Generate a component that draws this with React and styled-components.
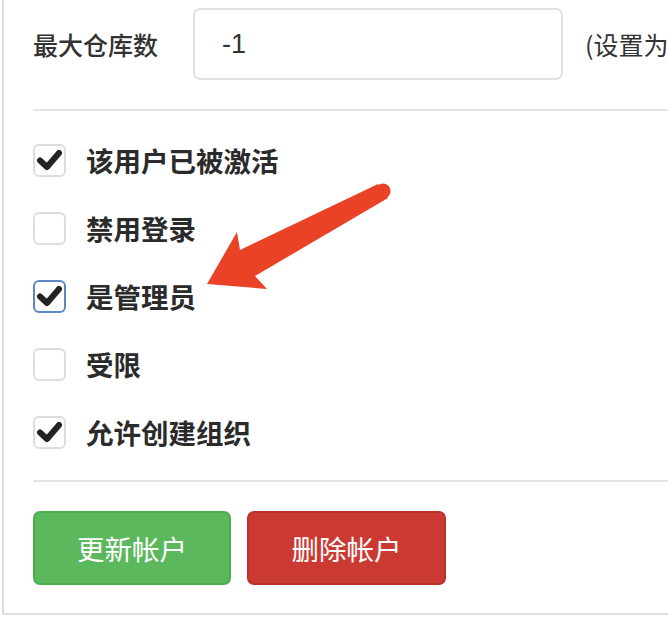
import React from 'react'
import styled, { createGlobalStyle } from 'styled-components'

const GlobalStyle = createGlobalStyle`
  html, body {
    margin: 0;
    padding: 0;
    background: #fff;
    overflow: hidden;
  }
  body {
    font-family: "Noto Sans CJK SC", "Liberation Sans", sans-serif;
    color: #333;
  }
`

const Page = styled.div`
  position: relative;
  width: 668px;
  height: 622px;
  overflow: hidden;
`

const Panel = styled.div`
  width: 760px;
  margin-left: 2px;
  border-left: 2px solid #ddd;
  border-bottom: 2px solid #ddd;
  padding: 8px 0 28px 29px;
`

const FieldRow = styled.div`
  display: flex;
  align-items: center;
  height: 72px;
`

const FieldLabel = styled.label`
  flex: 0 0 160px;
  font-size: 25px;
  font-weight: 500;
  white-space: nowrap;
  color: #333;
`

const TextInput = styled.input`
  flex: 0 0 370px;
  width: 370px;
  min-width: 0;
  box-sizing: border-box;
  height: 72px;
  border: 2px solid #e0e0e0;
  border-radius: 7px;
  padding: 0 0 0 27px;
  font-family: "Liberation Sans", "Noto Sans CJK SC", sans-serif;
  font-size: 27px;
  color: #333;
  outline: none;
`

const Help = styled.span`
  flex: 0 0 auto;
  margin-left: 22px;
  font-size: 25px;
  white-space: nowrap;
  color: #333;
`

const Divider = styled.hr`
  border: 0;
  border-top: 2px solid #e5e5e5;
  margin: ${p => p.$top}px 0 0;
`

const CheckList = styled.div`
  padding: 15px 0 14px;
`

const CheckRow = styled.label`
  display: flex;
  align-items: center;
  height: 68px;
  gap: 20px;
`

const Box = styled.span`
  box-sizing: border-box;
  width: 33px;
  height: 33px;
  border: 2px solid ${p => (p.$focus ? '#5a8ac6' : '#ddd')};
  border-radius: 6px;
  display: flex;
  align-items: center;
  justify-content: center;
  background: #fff;
`

const CheckText = styled.span`
  font-size: 27.5px;
  font-weight: 700;
  color: #2b2b2b;
`

const Actions = styled.div`
  display: flex;
  gap: 16px;
  margin-top: 29px;
`

const Button = styled.button`
  box-sizing: border-box;
  width: ${p => p.$w}px;
  height: 74px;
  border-radius: 7px;
  border: 2px solid ${p => (p.$danger ? '#b8322c' : '#4cae4c')};
  background: ${p => (p.$danger ? '#ca3a33' : '#5cb85c')};
  color: #fff;
  font-family: "Noto Sans CJK SC", sans-serif;
  font-size: 27.5px;
  font-weight: 400;
  cursor: pointer;
`

const Arrow = styled.svg`
  position: absolute;
  left: 200px;
  top: 176px;
  pointer-events: none;
`

const Check = () => (
  <svg width="27" height="24" viewBox="0 0 27 24">
    <polyline
      points="4,12.5 11,19 23,5"
      fill="none"
      stroke="#222"
      strokeWidth="6"
      strokeLinecap="round"
      strokeLinejoin="round"
    />
  </svg>
)

const options = [
  { name: '该用户已被激活', checked: true },
  { name: '禁用登录', checked: false },
  { name: '是管理员', checked: true, focus: true },
  { name: '受限', checked: false },
  { name: '允许创建组织', checked: true },
]

export default function App() {
  return (
    <Page>
      <GlobalStyle />
      <Panel>
        <FieldRow>
          <FieldLabel>最大仓库数</FieldLabel>
          <TextInput defaultValue="-1" />
          <Help>(设置为 -1 表示使用全局默认值)</Help>
        </FieldRow>
        <Divider $top={29} />
        <CheckList>
          {options.map(o => (
            <CheckRow key={o.name}>
              <Box $focus={o.focus}>{o.checked && <Check />}</Box>
              <CheckText>{o.name}</CheckText>
            </CheckRow>
          ))}
        </CheckList>
        <Divider $top={0} />
        <Actions>
          <Button $w={198}>更新帐户</Button>
          <Button $w={199} $danger>删除帐户</Button>
        </Actions>
      </Panel>
      <Arrow width="200" height="120" viewBox="200 176 200 120">
        <polygon
          points="207,284 237,232 240,250 378,184 388,198 255,276 267,289"
          fill="#ea4227"
        />
        <circle cx="383" cy="191" r="7.6" fill="#ea4227" />
      </Arrow>
    </Page>
  )
}
